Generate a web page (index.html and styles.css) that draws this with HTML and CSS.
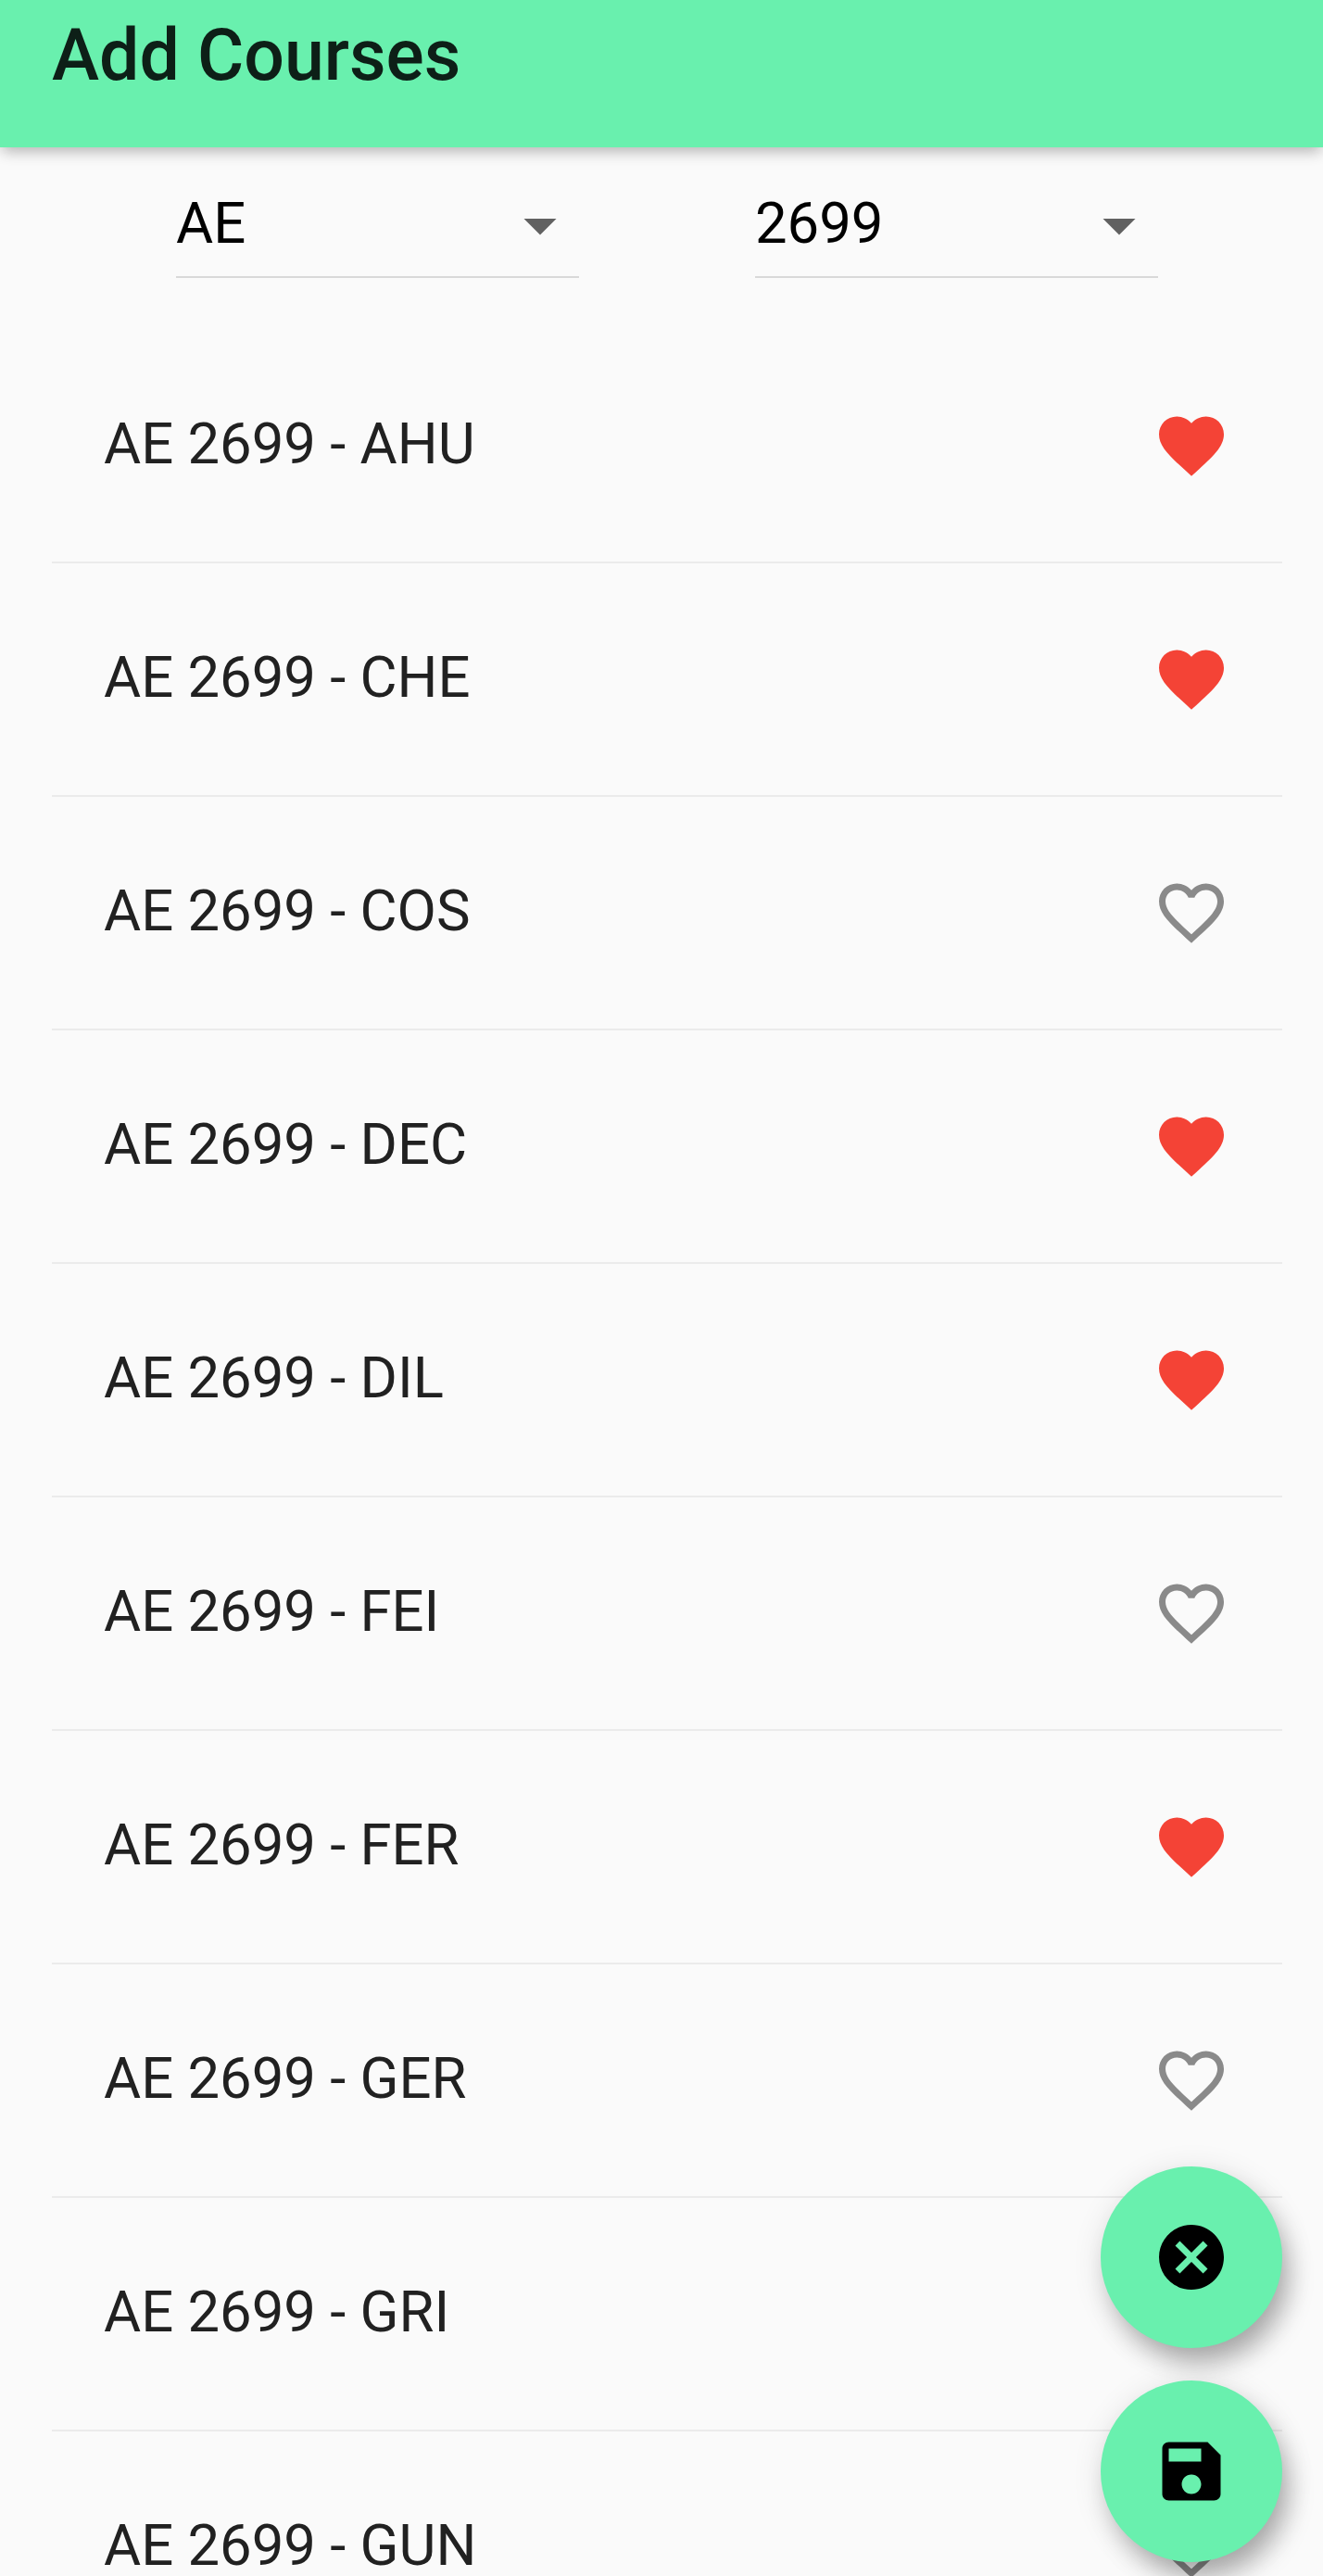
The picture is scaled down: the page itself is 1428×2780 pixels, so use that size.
FILE: index.html
```html
<!DOCTYPE html>
<html lang="en">
<head>
    <meta charset="UTF-8">
    <meta name="viewport" content="width=device-width, initial-scale=1.0">
    <title>Add Courses</title>
    <link rel="stylesheet" href="styles.css">
</head>
<body>
    <svg class="defs">
        <symbol id="heart" viewBox="0 0 24 24">
            <path d="M12 21.35l-1.45-1.32C5.4 15.36 2 12.28 2 8.5 2 5.42 4.42 3 7.5 3c1.74 0 3.41.81 4.5 2.09C13.09 3.81 14.76 3 16.5 3 19.58 3 22 5.42 22 8.5c0 3.78-3.4 6.86-8.55 11.54L12 21.35z"/>
        </symbol>
        <symbol id="heart-border" viewBox="0 0 24 24">
            <path d="M16.5 3c-1.74 0-3.41.81-4.5 2.09C10.91 3.81 9.24 3 7.5 3 4.42 3 2 5.42 2 8.5c0 3.78 3.4 6.86 8.55 11.54L12 21.35l1.45-1.32C18.6 15.36 22 12.28 22 8.5 22 5.42 19.58 3 16.5 3zm-4.4 15.55l-.1.1-.1-.1C7.14 14.24 4 11.39 4 8.5 4 6.5 5.5 5 7.5 5c1.54 0 3.04.99 3.57 2.36h1.87C13.46 5.99 14.96 5 16.5 5c2 0 3.5 1.5 3.5 3.5 0 2.89-3.14 5.74-7.9 10.05z"/>
        </symbol>
        <symbol id="drop" viewBox="0 0 24 24">
            <path d="M7 10l5 5 5-5z"/>
        </symbol>
    </svg>

    <header class="bar">
        <h1>Add Courses</h1>
    </header>

    <div class="filters">
        <div class="select">
            <span>AE</span>
            <svg class="icon"><use href="#drop"/></svg>
        </div>
        <div class="select">
            <span>2699</span>
            <svg class="icon"><use href="#drop"/></svg>
        </div>
    </div>

    <ul class="courses">
        <li><span>AE 2699 - AHU</span><svg class="icon liked"><use href="#heart"/></svg></li>
        <li><span>AE 2699 - CHE</span><svg class="icon liked"><use href="#heart"/></svg></li>
        <li><span>AE 2699 - COS</span><svg class="icon"><use href="#heart-border"/></svg></li>
        <li><span>AE 2699 - DEC</span><svg class="icon liked"><use href="#heart"/></svg></li>
        <li><span>AE 2699 - DIL</span><svg class="icon liked"><use href="#heart"/></svg></li>
        <li><span>AE 2699 - FEI</span><svg class="icon"><use href="#heart-border"/></svg></li>
        <li><span>AE 2699 - FER</span><svg class="icon liked"><use href="#heart"/></svg></li>
        <li><span>AE 2699 - GER</span><svg class="icon"><use href="#heart-border"/></svg></li>
        <li><span>AE 2699 - GRI</span></li>
        <li><span>AE 2699 - GUN</span><svg class="icon"><use href="#heart-border"/></svg></li>
    </ul>

    <div class="actions">
        <button class="fab" aria-label="Cancel">
            <svg class="icon" viewBox="0 0 24 24">
                <path d="M12 2C6.47 2 2 6.47 2 12s4.47 10 10 10 10-4.47 10-10S17.53 2 12 2zm5 13.59L15.59 17 12 13.41 8.41 17 7 15.59 10.59 12 7 8.41 8.41 7 12 10.59 15.59 7 17 8.41 13.41 12 17 15.59z"/>
            </svg>
        </button>
        <button class="fab" aria-label="Save">
            <svg class="icon" viewBox="0 0 24 24">
                <path d="M17 3H5c-1.11 0-2 .9-2 2v14c0 1.1.89 2 2 2h14c1.1 0 2-.9 2-2V7l-4-4zm-5 16c-1.66 0-3-1.34-3-3s1.34-3 3-3 3 1.34 3 3-1.34 3-3 3zm3-10H5V5h10v4z"/>
            </svg>
        </button>
    </div>
</body>
</html>
```
FILE: styles.css
```css
*{
    box-sizing: border-box;
}
body,h1,ul,li{
    margin: 0;
    padding: 0;
    list-style: none;
}
body{
    position: relative;
    height: 2780px;
    overflow: hidden;
    background: #fafafa;
    font-family: Roboto, sans-serif;
    font-size: 61.6px;
    line-height: 74px;
}
.defs{
    display: none;
}
.icon{
    display: block;
    flex: none;
    width: 84px;
    height: 84px;
}
.bar{
    height: 159px;
    padding: 15px 56px 0;
    background: #69f0ae;
    box-shadow: 0 7px 14px -3px rgba(0,0,0,0.2), 0 3px 18px rgba(0,0,0,0.12);
}
.bar h1{
    font-size: 77px;
    line-height: 90px;
    font-weight: 500;
    color: rgba(0,0,0,0.87);
}
.filters{
    display: flex;
    gap: 190px;
    height: 224px;
    padding: 28px 0 0 190px;
}
.select{
    display: flex;
    justify-content: space-between;
    width: 435px;
    height: 113px;
    padding-top: 14px;
    border-bottom: 2px solid #d9d9d9;
    color: #000;
}
.select span{
    padding-top: 3px;
}
.select .icon{
    fill: #616161;
}
.courses{
    padding: 0 44px 0 56px;
}
.courses li{
    display: flex;
    align-items: center;
    justify-content: space-between;
    height: 252px;
    padding: 0 56px;
    border-bottom: 2px solid #ebebeb;
    color: #212121;
}
.courses li:first-child{
    height: 225px;
    padding-bottom: 27px;
}
.courses span{
    padding-bottom: 4px;
}
.courses .icon{
    fill: #8a8a8a;
}
.courses .liked{
    fill: #f44336;
}
/* floating buttons over the list */
.actions{
    position: absolute;
    right: 44px;
    bottom: 15px;
    display: flex;
    flex-direction: column;
    gap: 35px;
}
.fab{
    display: flex;
    align-items: center;
    justify-content: center;
    width: 196px;
    height: 196px;
    padding: 0;
    border: 0;
    border-radius: 50%;
    background: #69f0ae;
    box-shadow: 10px 20px 28px -4px rgba(0,0,0,0.28), 2px 6px 34px rgba(0,0,0,0.12);
}
```
